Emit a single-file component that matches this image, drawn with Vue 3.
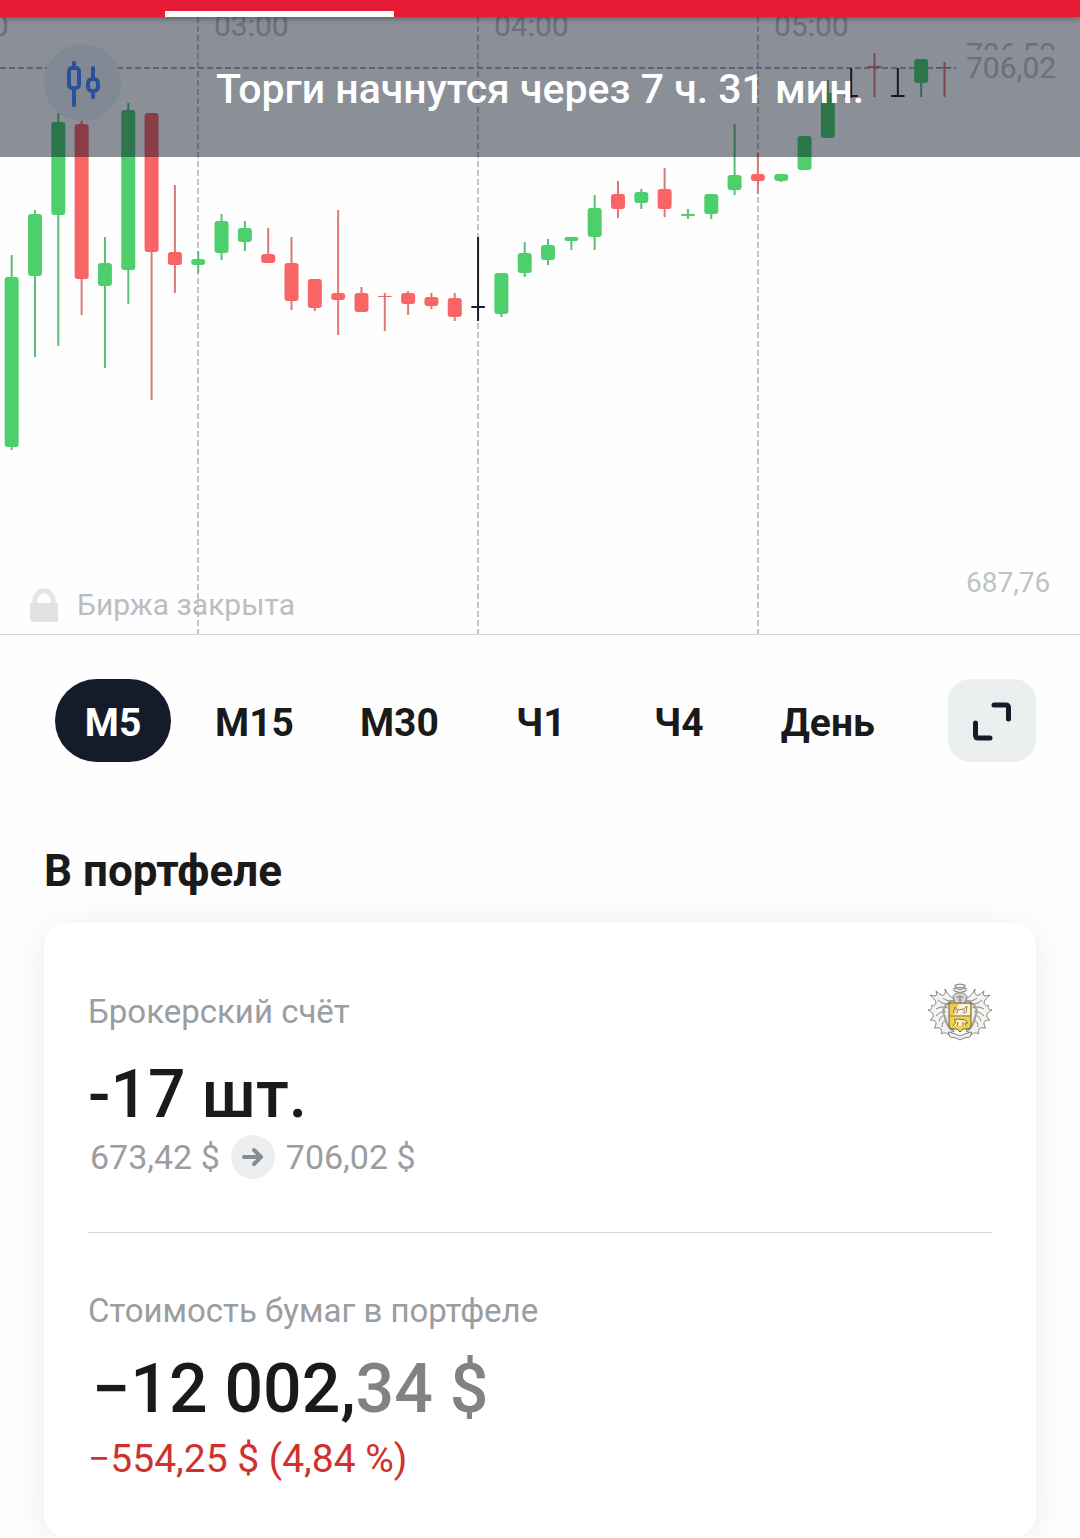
<template>
  <div class="page">
    <div class="tab-strip">
      <div class="tab-indicator"></div>
    </div>

    <section class="chart">
      <svg class="chart-svg" viewBox="0 17 1080 617">
        <defs>
          <clipPath id="price-clip">
            <rect x="960" y="17" width="120" height="33" />
          </clipPath>
        </defs>

        <!-- grid -->
        <line
          v-for="x in gridLines"
          :key="`grid-${x}`"
          :x1="x"
          y1="17"
          :x2="x"
          y2="634"
          class="grid-line"
        />
        <line x1="0" y1="68" x2="956" y2="68" class="price-line" />

        <!-- time labels -->
        <text
          v-for="label in timeLabels"
          :key="label.text"
          :x="label.x"
          y="36"
          class="axis-text"
        >{{ label.text }}</text>

        <!-- price labels -->
        <text x="966" y="64" class="axis-text" clip-path="url(#price-clip)">706,52</text>
        <text x="966" y="78" class="axis-text">706,02</text>
        <text x="966" y="592" class="axis-text low">687,76</text>

        <!-- candles -->
        <g v-for="(c, i) in candles" :key="`candle-${i}`" :class="c[0]">
          <line :x1="getX(i)" :y1="c[1]" :x2="getX(i)" :y2="c[4]" class="wick" />
          <rect
            :x="getX(i) - 7"
            :y="c[2]"
            width="14"
            :height="c[3] - c[2]"
            :rx="Math.min(3, (c[3] - c[2]) / 2)"
          />
        </g>
      </svg>

      <div class="closed">
        <svg width="28" height="34" viewBox="0 0 28 34">
          <path d="M5 16V12a9 9 0 0 1 18 0v4" fill="none" stroke="#e3e5e6" stroke-width="5" />
          <path d="M0 15H28V34H4a4 4 0 0 1-4-4Z" fill="#dfe1e2" />
        </svg>
        <span>Биржа закрыта</span>
      </div>

      <button class="chart-type" type="button" aria-label="Тип графика">
        <svg width="36" height="48" viewBox="0 0 36 48" fill="none" stroke="#4488ff" stroke-width="4" stroke-linecap="round">
          <rect x="4" y="9" width="10" height="20" rx="3" />
          <path d="M9 4V9M9 29V46" />
          <rect x="23" y="20" width="10" height="12" rx="4" />
          <path d="M28 9V20M28 32V38" />
        </svg>
      </button>

      <div class="banner">Торги начнутся через 7 ч. 31 мин.</div>
    </section>

    <div class="toolbar">
      <div class="periods">
        <button
          v-for="p in periods"
          :key="p"
          type="button"
          class="period"
          :class="{ active: p === activePeriod }"
          @click="activePeriod = p"
        >{{ p }}</button>
      </div>
      <button class="expand" type="button" aria-label="Развернуть">
        <svg width="40" height="40" viewBox="0 0 40 40" fill="none" stroke="#141c2b" stroke-width="5" stroke-linecap="round" stroke-linejoin="round">
          <path d="M22 4H34Q36.500 4 36.500 7V18" />
          <path d="M3.500 22V34Q3.500 37 6 37H18" />
        </svg>
      </button>
    </div>

    <h2 class="title">В портфеле</h2>

    <section class="card">
      <div class="account">
        <div class="label">Брокерский счёт</div>
        <svg class="crest" width="64" height="58" viewBox="0 0 64 58" fill="none" stroke="#85837d" stroke-width="1">
          <!-- mantling -->
          <g v-for="side in crestSides" :key="side" :transform="side">
            <path
              d="M28 17C24 15 20 12 17 6C18 11 16 13 13 12C11 11 10 9 8 8C9 11 9 13 7 13C5 13 4 12 2 12C5 15 8 17 8 20C7 23 5 22 3 23C5 25 4 27 0 27C4 29 6 31 5 34C4 36 3 37 2 37C6 37 8 38 8 40C8 43 7 44 6 45C9 45 11 44 13 46C14 48 14 50 13 51C17 49 19 50 20 52L25 48Z"
              fill="#f2f2f0"
            />
            <path d="M26 18C20 18 17 17 15 15M23 21C18 22 13 20 10 17M20 25C16 23 12 24 8 26M18 29C14 28 11 30 8 33M17 33C14 32 12 35 11 38M18 38C16 37 14 40 14 44" />
            <path d="M28 17C17 19 13 27 17 34C18 41 20 45 26 49" stroke="#a3a19b" stroke-width="2" />
          </g>
          <!-- helmet -->
          <path d="M27 20L25 13L28 10H36L39 13L37 20L32 23Z" fill="#d7d6d1" />
          <path d="M26 8Q32 11 38 8V5Q32 8 26 5ZM27 4Q32 6 37 4V2Q32 0 27 2ZM28 14H36M30 17H34M32 12V22" fill="#eeeeeb" />
          <!-- shield -->
          <path d="M21 20H43V43Q43 46 39 46H35L32 49L29 46H25Q21 46 21 43Z" fill="#f3d04a" stroke="#625b43" />
          <path d="M22 21H42V32H22Z" fill="#f7f3df" stroke="none" />
          <path d="M22 21H31L26 32H22Z" fill="#f0cd48" stroke="none" />
          <path d="M25 30L27 24L30 27L36 26L39 23L38 30M29 27V31M36 27V31M22 33H42" stroke="#938453" />
          <path d="M25 43L28 39L26 37L30 36L37 37L40 40L37 40L38 43M30 39L29 43M35 39V43" fill="#f8efc4" stroke="#8c6e25" />
          <!-- ribbon -->
          <path d="M20 49Q26 50 32 53Q38 50 44 49L42 54Q37 54 32 57Q27 54 22 54Z" fill="#f1f1ee" />
        </svg>
      </div>
      <div class="amount">-17 шт.</div>
      <div class="prices">
        <span>673,42 $</span>
        <span class="arrow">
          <svg width="22" height="20" viewBox="0 0 22 20" fill="none" stroke="#868c96" stroke-width="4" stroke-linecap="round" stroke-linejoin="round">
            <path d="M2 10H19M12 3L19 10L12 17" />
          </svg>
        </span>
        <span>706,02 $</span>
      </div>

      <hr class="divider" />

      <div class="label">Стоимость бумаг в портфеле</div>
      <div class="amount total">−12 002,<span class="cents">34 $</span></div>
      <div class="change">−554,25 $ (4,84 %)</div>
    </section>
  </div>
</template>

<script setup>
import { ref } from 'vue'

const periods = ['М5', 'М15', 'М30', 'Ч1', 'Ч4', 'День']
const activePeriod = ref('М5')

const gridLines = [198, 478, 758]
const timeLabels = [
  { text: '02:00', x: -66 },
  { text: '03:00', x: 214 },
  { text: '04:00', x: 494 },
  { text: '05:00', x: 774 }
]

const crestSides = ['', 'translate(64 0) scale(-1 1)']

// direction, high, body top, body bottom, low
const candles = [
  ['up', 255, 277, 447, 450],
  ['up', 210, 214, 276, 357],
  ['up', 113, 122, 215, 346],
  ['down', 121, 124, 279, 315],
  ['up', 237, 263, 286, 368],
  ['up', 103, 110, 270, 304],
  ['down', 113, 113, 252, 400],
  ['down', 185, 252, 265, 293],
  ['up', 251, 259, 265, 273],
  ['up', 214, 221, 253, 260],
  ['up', 221, 228, 242, 251],
  ['down', 228, 254, 263, 263],
  ['down', 237, 263, 301, 310],
  ['down', 279, 279, 308, 311],
  ['down', 210, 293, 300, 335],
  ['down', 287, 293, 312, 312],
  ['down', 293, 296, 297, 331],
  ['down', 291, 293, 304, 315],
  ['down', 293, 297, 306, 309],
  ['down', 293, 298, 317, 321],
  ['flat', 237, 306, 308, 321],
  ['up', 273, 273, 314, 317],
  ['up', 242, 253, 273, 277],
  ['up', 239, 245, 260, 265],
  ['up', 237, 237, 241, 250],
  ['up', 195, 208, 237, 250],
  ['down', 181, 194, 209, 218],
  ['up', 189, 192, 203, 209],
  ['down', 168, 189, 209, 217],
  ['up', 209, 214, 216, 219],
  ['up', 194, 194, 214, 219],
  ['up', 124, 175, 190, 195],
  ['down', 153, 174, 181, 194],
  ['up', 174, 174, 181, 182],
  ['up', 136, 136, 170, 170],
  ['up', 80, 93, 138, 138],
  ['flat', 68, 95, 97, 98],
  ['down', 53, 66, 68, 97],
  ['flat', 68, 95, 97, 97],
  ['up', 59, 59, 83, 97],
  ['down', 62, 67, 68, 97]
]

const getX = (index) => 11.67 + index * 23.32
</script>

<style>
body {
  margin: 0;
  background: #fefefe;
}
</style>

<style scoped>
.page {
  font-family: Roboto, 'Noto Sans', sans-serif;
  color: #1a1a1a;
  overflow: hidden;
}

button {
  font-family: inherit;
  border: none;
  padding: 0;
  cursor: pointer;
}

.tab-strip {
  position: relative;
  z-index: 1;
  display: flex;
  align-items: flex-end;
  height: 17px;
  padding-left: 165px;
  background: #e61b36;
  box-shadow: 0 1px 6px rgba(0, 0, 0, 0.4);
}

.tab-indicator {
  width: 229px;
  height: 6px;
  background: #fff;
}

.chart {
  position: relative;
  border-bottom: 1px solid #d5d6d8;
}

.chart-svg {
  display: block;
  width: 100%;
  height: auto;
}

.grid-line,
.price-line {
  stroke: #c4c5c8;
  stroke-width: 2;
  stroke-dasharray: 6 3;
}

.price-line {
  stroke: #a9abb0;
}

.axis-text {
  font-size: 30px;
  fill: #c0c2c4;
}

.axis-text.low {
  font-size: 28px;
}

.wick {
  stroke-width: 2;
}

.up rect {
  fill: #4dcf6c;
}

.up .wick {
  stroke: #5bbd78;
}

.down rect {
  fill: #f96464;
}

.down .wick {
  stroke: #dc7777;
}

.flat rect {
  fill: #15202b;
}

.flat .wick {
  stroke: #15202b;
}

.closed {
  position: absolute;
  left: 30px;
  bottom: 11px;
  display: flex;
  align-items: center;
  gap: 19px;
  font-size: 30px;
  line-height: 36px;
  color: #bbbdbf;
}

.chart-type {
  position: absolute;
  top: 27px;
  left: 44px;
  display: flex;
  align-items: center;
  justify-content: center;
  width: 77px;
  height: 77px;
  border-radius: 50%;
  background: #e8f1f5;
}

.banner {
  position: absolute;
  top: 0;
  left: 0;
  right: 0;
  height: 140px;
  line-height: 144px;
  text-align: center;
  font-size: 41px;
  font-weight: 500;
  color: #fff;
  background: rgba(10, 19, 38, 0.47);
}

.toolbar {
  display: flex;
  align-items: center;
  justify-content: space-between;
  padding: 44px 44px 0 55px;
}

.periods {
  display: flex;
  gap: 22px;
}

.period {
  min-width: 116px;
  height: 83px;
  padding: 4px 22px 0;
  border-radius: 42px;
  background: none;
  font-size: 39px;
  font-weight: 700;
  color: #1a1a1a;
}

.period.active {
  background: #141c2b;
  color: #fff;
}

.expand {
  display: flex;
  align-items: center;
  justify-content: center;
  width: 88px;
  height: 83px;
  border-radius: 22px;
  background: #eceff0;
}

.title {
  margin: 81px 44px 0;
  font-size: 44px;
  line-height: 56px;
  font-weight: 700;
}

.card {
  margin: 24px 44px 0;
  padding: 60px 44px 54px;
  border-radius: 22px;
  background: #fff;
  box-shadow: 0 4px 36px rgba(0, 0, 0, 0.08);
}

.account {
  display: flex;
  align-items: center;
  justify-content: space-between;
}

.label {
  font-size: 33px;
  line-height: 44px;
  color: #9a9da1;
}

.amount {
  margin-top: 14px;
  font-size: 66px;
  line-height: 80px;
  font-weight: 500;
}

.amount.total {
  margin-top: 16px;
  padding-left: 4px;
  font-size: 68px;
}

.prices {
  display: flex;
  align-items: center;
  gap: 11px;
  padding-left: 2px;
  font-size: 34px;
  line-height: 44px;
  color: #9a9da1;
}

.arrow {
  display: flex;
  align-items: center;
  justify-content: center;
  width: 44px;
  height: 44px;
  border-radius: 50%;
  background: #eceef0;
}

.divider {
  height: 1px;
  margin: 53px 0 56px;
  border: none;
  background: #d8d9db;
}

.cents {
  color: #828282;
}

.change {
  margin-top: 6px;
  font-size: 39px;
  line-height: 48px;
  color: #d0312f;
}
</style>
